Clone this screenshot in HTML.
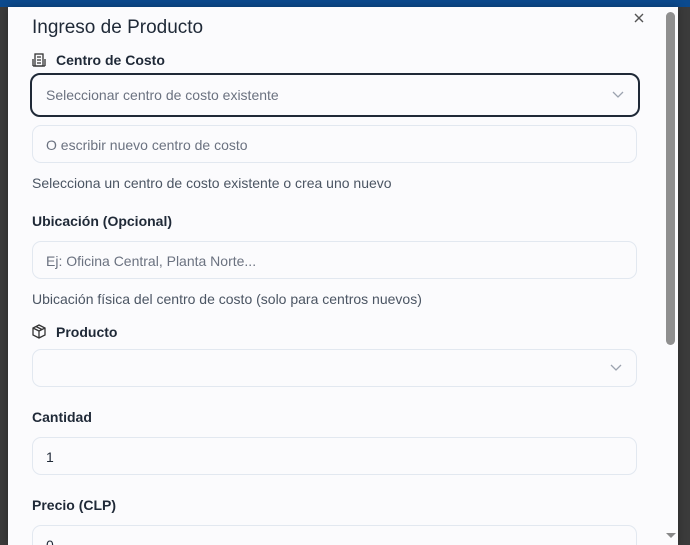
<!DOCTYPE html><html style="overflow:hidden;height:545px"><head><style>
body{margin:0;width:690px;height:545px;overflow:hidden;background:#3b3b3b;font-family:"Liberation Sans",sans-serif;position:relative}
.top{position:absolute;left:0;top:0;width:690px;height:7px;background:#0b4a8e}
.m{position:absolute;left:8px;top:7px;width:670px;height:538px;background:#fbfbfd;box-shadow:0 0 8px rgba(0,0,0,.3)}
.a{position:absolute;left:32px;color:#1f2937}
.h{font-size:19px;top:17px}
.l{font-size:14px;font-weight:bold}
.i{position:absolute;left:32px;width:605px;height:38px;border:1px solid #e2e8f0;border-radius:9px;background:#fbfbfd;box-sizing:border-box;font-size:14px;color:#6b7280;padding-left:13px;line-height:38px}
.t{font-size:14px;color:#4b5563}
.ch{position:absolute;right:14px;top:14px}
.sb{position:absolute;left:666px;top:12px;width:9px;height:333px;background:#8f8f8f;border-radius:5px}
</style></head><body>
<div class="top"></div>
<div class="m"></div>
<div class="a h">Ingreso de Producto</div>
<svg style="position:absolute;left:634px;top:13px" width="10" height="10" viewBox="0 0 10 10"><path d="M1 1l8 8M9 1l-8 8" stroke="#555" stroke-width="1.4"/></svg>
<svg style="position:absolute;left:32px;top:53px" width="14" height="14" viewBox="0 0 14 14" fill="none" stroke="#333" stroke-width="1.3"><rect x="3" y="1" width="8" height="12"/><path d="M1 13h12M1 6v7M13 6v7M5 4h4M5 7h4M5 10h4"/></svg>
<div class="a l" style="top:52px;left:56px">Centro de Costo</div>
<div class="i" style="top:73px;left:30px;width:610px;height:44px;border:2px solid #1f2937;border-radius:10px;line-height:40px;padding-left:14px">Seleccionar centro de costo existente<svg class="ch" width="12" height="8" viewBox="0 0 12 8" style="top:16px"><path d="M1 1l5 5 5-5" stroke="#9ca3af" fill="none" stroke-width="1.3"/></svg></div>
<div class="i" style="top:125px">O escribir nuevo centro de costo</div>
<div class="a t" style="top:175px">Selecciona un centro de costo existente o crea uno nuevo</div>
<div class="a l" style="top:213px">Ubicación (Opcional)</div>
<div class="i" style="top:241px">Ej: Oficina Central, Planta Norte...</div>
<div class="a t" style="top:291px">Ubicación física del centro de costo (solo para centros nuevos)</div>
<svg style="position:absolute;left:32px;top:324px" width="14" height="15" viewBox="0 0 14 15" fill="none" stroke="#333" stroke-width="1.3"><path d="M7 1l6 3v7l-6 3-6-3V4z M1 4l6 3 6-3M7 7v7M4 2.5l6 3"/></svg>
<div class="a l" style="top:324px;left:56px">Producto</div>
<div class="i" style="top:349px"><svg class="ch" width="12" height="8" viewBox="0 0 12 8"><path d="M1 1l5 5 5-5" stroke="#9ca3af" fill="none" stroke-width="1.3"/></svg></div>
<div class="a l" style="top:409px">Cantidad</div>
<div class="i" style="top:437px;color:#1f2937">1</div>
<div class="a l" style="top:497px">Precio (CLP)</div>
<div class="i" style="top:525px;height:20px;border-bottom:none;border-radius:9px 9px 0 0;color:#1f2937;line-height:38px;overflow:hidden">0</div>
<div class="sb"></div>
<div style="position:absolute;left:666px;top:533px;width:0;height:0;border-left:5px solid transparent;border-right:5px solid transparent;border-top:5px solid #888"></div>
</body></html>
